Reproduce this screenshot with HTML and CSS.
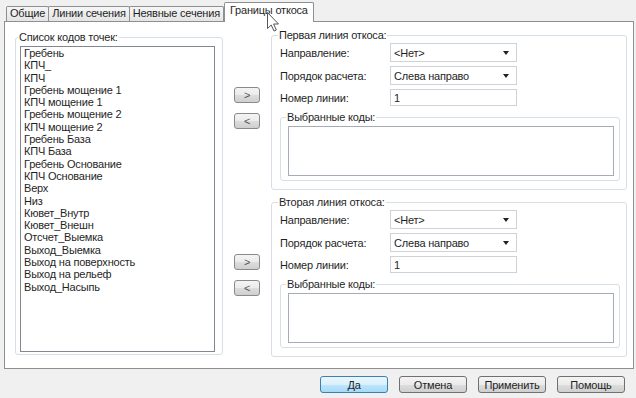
FILE: index.html
```html
<!DOCTYPE html>
<html lang="ru">
<head>
    <meta charset="UTF-8">
    <meta name="viewport" content="width=device-width, initial-scale=1.0">
    <title>Границы откоса</title>
    <link rel="stylesheet" href="styles.css">
</head>
<body>
    <div class="tabs">
        <div class="tab">Общие</div>
        <div class="tab">Линии сечения</div>
        <div class="tab">Неявные сечения</div>
        <div class="tab active">Границы откоса</div>
    </div>

    <div class="panel">
        <fieldset class="group codes">
            <legend>Список кодов точек:</legend>
            <div class="listbox">
                <div>Гребень</div>
                <div>КПЧ_</div>
                <div>КПЧ</div>
                <div>Гребень мощение 1</div>
                <div>КПЧ мощение 1</div>
                <div>Гребень мощение 2</div>
                <div>КПЧ мощение 2</div>
                <div>Гребень База</div>
                <div>КПЧ База</div>
                <div>Гребень Основание</div>
                <div>КПЧ Основание</div>
                <div>Верх</div>
                <div>Низ</div>
                <div>Кювет_Внутр</div>
                <div>Кювет_Внешн</div>
                <div>Отсчет_Выемка</div>
                <div>Выход_Выемка</div>
                <div>Выход на поверхность</div>
                <div>Выход на рельеф</div>
                <div>Выход_Насыпь</div>
            </div>
        </fieldset>

        <div class="lines">
            <div class="line-row">
                <div class="arrows">
                    <button class="btn small">&gt;</button>
                    <button class="btn small">&lt;</button>
                </div>
                <fieldset class="group line">
                    <legend>Первая линия откоса:</legend>
                    <div class="form">
                        <span class="label">Направление:</span>
                        <div class="combo"><span>&lt;Нет&gt;</span><i class="arrow"></i></div>
                        <span class="label">Порядок расчета:</span>
                        <div class="combo"><span>Слева направо</span><i class="arrow"></i></div>
                        <span class="label">Номер линии:</span>
                        <div class="input">1</div>
                    </div>
                    <fieldset class="group picked">
                        <legend>Выбранные коды:</legend>
                        <div class="listbox short"></div>
                    </fieldset>
                </fieldset>
            </div>

            <div class="line-row">
                <div class="arrows">
                    <button class="btn small">&gt;</button>
                    <button class="btn small">&lt;</button>
                </div>
                <fieldset class="group line">
                    <legend>Вторая линия откоса:</legend>
                    <div class="form">
                        <span class="label">Направление:</span>
                        <div class="combo"><span>&lt;Нет&gt;</span><i class="arrow"></i></div>
                        <span class="label">Порядок расчета:</span>
                        <div class="combo"><span>Слева направо</span><i class="arrow"></i></div>
                        <span class="label">Номер линии:</span>
                        <div class="input">1</div>
                    </div>
                    <fieldset class="group picked">
                        <legend>Выбранные коды:</legend>
                        <div class="listbox short"></div>
                    </fieldset>
                </fieldset>
            </div>
        </div>
    </div>

    <div class="footer">
        <button class="btn default">Да</button>
        <button class="btn">Отмена</button>
        <button class="btn">Применить</button>
        <button class="btn">Помощь</button>
    </div>

    <svg class="cursor" width="13" height="20" viewBox="0 0 13 20">
        <path d="M0.5 0.5 L0.5 16.5 L4.2 13 L7 19 L9.3 18 L6.6 12 L11.5 12 Z" fill="#fff" stroke="#555" stroke-width="1"/>
    </svg>
</body>
</html>
```

FILE: styles.css
```css
body {
    font-family: "Liberation Sans", Arial, sans-serif;
    font-size: 11px;
    letter-spacing: -0.2px;
    color: #1f1f1f;
    background-color: #f0f0f0;
    margin: 0;
    width: 636px;
    height: 398px;
    position: relative;
    overflow: hidden;
}

/* вкладки */
.tabs {
    display: flex;
    align-items: flex-end;
    height: 21px;
    padding-left: 6px;
}

.tab {
    height: 15px;
    box-sizing: border-box;
    padding: 0 3px;
    line-height: 13px;
    border: 1px solid #8e8f8f;
    border-bottom: none;
    border-radius: 2px 2px 0 0;
    background: linear-gradient(#f6f6f6, #e4e4e4);
    margin-right: -1px;
}

.tab.active {
    height: 20px;
    padding: 0 5px;
    line-height: 15px;
    background: #fff;
    margin-bottom: -1px;
    margin-left: 1px;
    position: relative;
    z-index: 1;
}

.panel {
    margin: 0 2px 0 4px;
    height: 348px;
    box-sizing: border-box;
    border: 1px solid #8e8f8f;
    background: #fff;
    display: flex;
    padding: 7px 0 0 10px;
}

/* групповые рамки */
.group {
    margin: 0;
    min-width: 0;
    border: 1px solid #d5dfe5;
    border-radius: 3px;
    box-sizing: border-box;
}

.group legend {
    padding: 0 1px;
    margin-left: -2px;
    line-height: 13px;
}

.codes {
    width: 208px;
    height: 324px;
    margin-top: 2px;
    padding: 2px 7px 2px 4px;
}

.listbox {
    height: 306px;
    box-sizing: border-box;
    border: 1px solid #828790;
    padding-left: 3px;
    line-height: 12.3px;
    background: #fff;
}

.listbox.short {
    height: 50px;
    border-color: #a5acb5;
}

.lines {
    display: flex;
    flex-direction: column;
    gap: 6px;
}

.line-row {
    display: flex;
    align-items: center;
}

.arrows {
    width: 48px;
    display: flex;
    flex-direction: column;
    align-items: center;
    gap: 10px;
    padding-bottom: 4px;
}

.line {
    width: 356px;
    height: 161px;
    padding: 1px 6px 8px 8px;
}

.form {
    display: grid;
    grid-template-columns: 110px 127px;
    row-gap: 4px;
    align-items: center;
}

.combo,
.input {
    height: 19px;
    box-sizing: border-box;
    border: 1px solid #cfd3d7;
    background: #fff;
    padding: 0 7px 0 3px;
    display: flex;
    align-items: center;
    justify-content: space-between;
}

.input {
    height: 17px;
}

.arrow {
    width: 0;
    height: 0;
    border-left: 3.5px solid transparent;
    border-right: 3.5px solid transparent;
    border-top: 4px solid #222;
}

.picked {
    margin-top: 5px;
    height: 70px;
    padding: 2px 5px 3px 7px;
}

/* кнопки */
.btn {
    font-family: "Liberation Sans", Arial, sans-serif;
    font-size: 11px;
    letter-spacing: -0.2px;
    color: #1f1f1f;
    width: 68px;
    height: 17px;
    padding: 0;
    border: 1px solid #707070;
    border-radius: 3px;
    background: linear-gradient(#f4f4f4 0%, #ebebeb 50%, #dddddd 51%, #cfcfcf 100%);
}

.btn.small {
    width: 26px;
    height: 16px;
    border-color: #8a8a8a;
    color: #555;
}

.btn.default {
    border-color: #3c7fb1;
    background: linear-gradient(#eaf6fd 0%, #d9f0fc 50%, #bee6fd 51%, #a7d9f5 100%);
}

.footer {
    display: flex;
    justify-content: flex-end;
    gap: 11px;
    padding: 7px 11px 0 0;
}

.cursor {
    position: absolute;
    left: 267px;
    top: 12px;
    z-index: 2;
}
```
